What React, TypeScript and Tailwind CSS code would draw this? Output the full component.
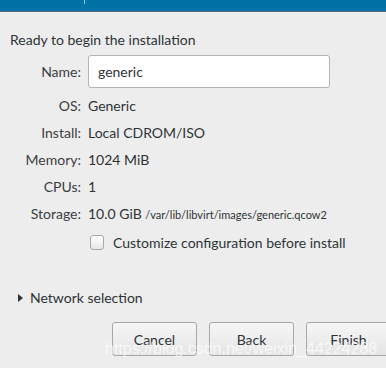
import React from "react";

const rows: [string, React.ReactNode][] = [
  ["OS:", "Generic"],
  ["Install:", "Local CDROM/ISO"],
  ["Memory:", "1024 MiB"],
  ["CPUs:", "1"],
  [
    "Storage:",
    <>
      10.0 GiB <span className="text-[11px]">/var/lib/libvirt/images/generic.qcow2</span>
    </>,
  ],
];

export default function App() {
  return (
    <div
      className="relative w-[386px] h-[368px] overflow-hidden bg-[#ededed] text-[#2e3436] text-[14px]"
      style={{ fontFamily: "Lato, 'Open Sans', sans-serif" }}
    >
      <div className="h-[12px] bg-[#0072a8] border-b border-[#54707f] flex">
        <div className="ml-[84px] w-px h-[4px] bg-[#8ec3e6]" />
      </div>

      <div className="pl-[10px] pt-[17px]">Ready to begin the installation</div>

      <div className="mt-[5px] grid grid-cols-[81px_1fr] gap-x-[7px] items-center">
        <div className="text-right text-[#3c4043]">Name:</div>
        <div className="h-[33px] w-[242px] rounded-[3px] border border-[#b4b4b4] bg-white flex items-center pl-[9px]">
          generic
        </div>
        {rows.map(([k, v], i) => (
          <React.Fragment key={k}>
            <div className={`text-right text-[#3c4043] h-[27px] leading-[27px] ${i === 0 ? "mt-[4px]" : ""}`}>{k}</div>
            <div className={`h-[27px] leading-[27px] whitespace-nowrap ${i === 0 ? "mt-[4px]" : ""}`}>{v}</div>
          </React.Fragment>
        ))}
      </div>

      <div className="mt-[5px] ml-[90px] flex items-center gap-[9px]">
        <div className="w-[14px] h-[15px] rounded-[3px] border border-[#a8a8a8] bg-gradient-to-b from-white to-[#e6e6e6]" />
        <span>Customize configuration before install</span>
      </div>

      <div className="mt-[34px] ml-[18px] flex items-center gap-[7px]">
        <svg width="5" height="8" viewBox="0 0 5 8">
          <path d="M0 0 L5 4 L0 8 Z" fill="#2e3436" />
        </svg>
        <span>Network selection</span>
      </div>

      <div className="mt-[14px] ml-[112px] flex gap-[12px]">
        {["Cancel", "Back", "Finish"].map((b) => (
          <button
            key={b}
            className="w-[85px] h-[34px] shrink-0 rounded-[3px] border border-[#a8a8a8] bg-gradient-to-b from-[#f6f6f6] to-[#e4e4e4] text-[#2e3436]"
          >
            {b}
          </button>
        ))}
      </div>

      <div
        className="absolute left-[105px] top-[337px] text-[16px] text-white/70 whitespace-nowrap pointer-events-none"
        style={{ fontFamily: "Arial, 'Liberation Sans', sans-serif" }}
      >
        https://blog.csdn.net/weixin_44224288
      </div>
    </div>
  );
}
